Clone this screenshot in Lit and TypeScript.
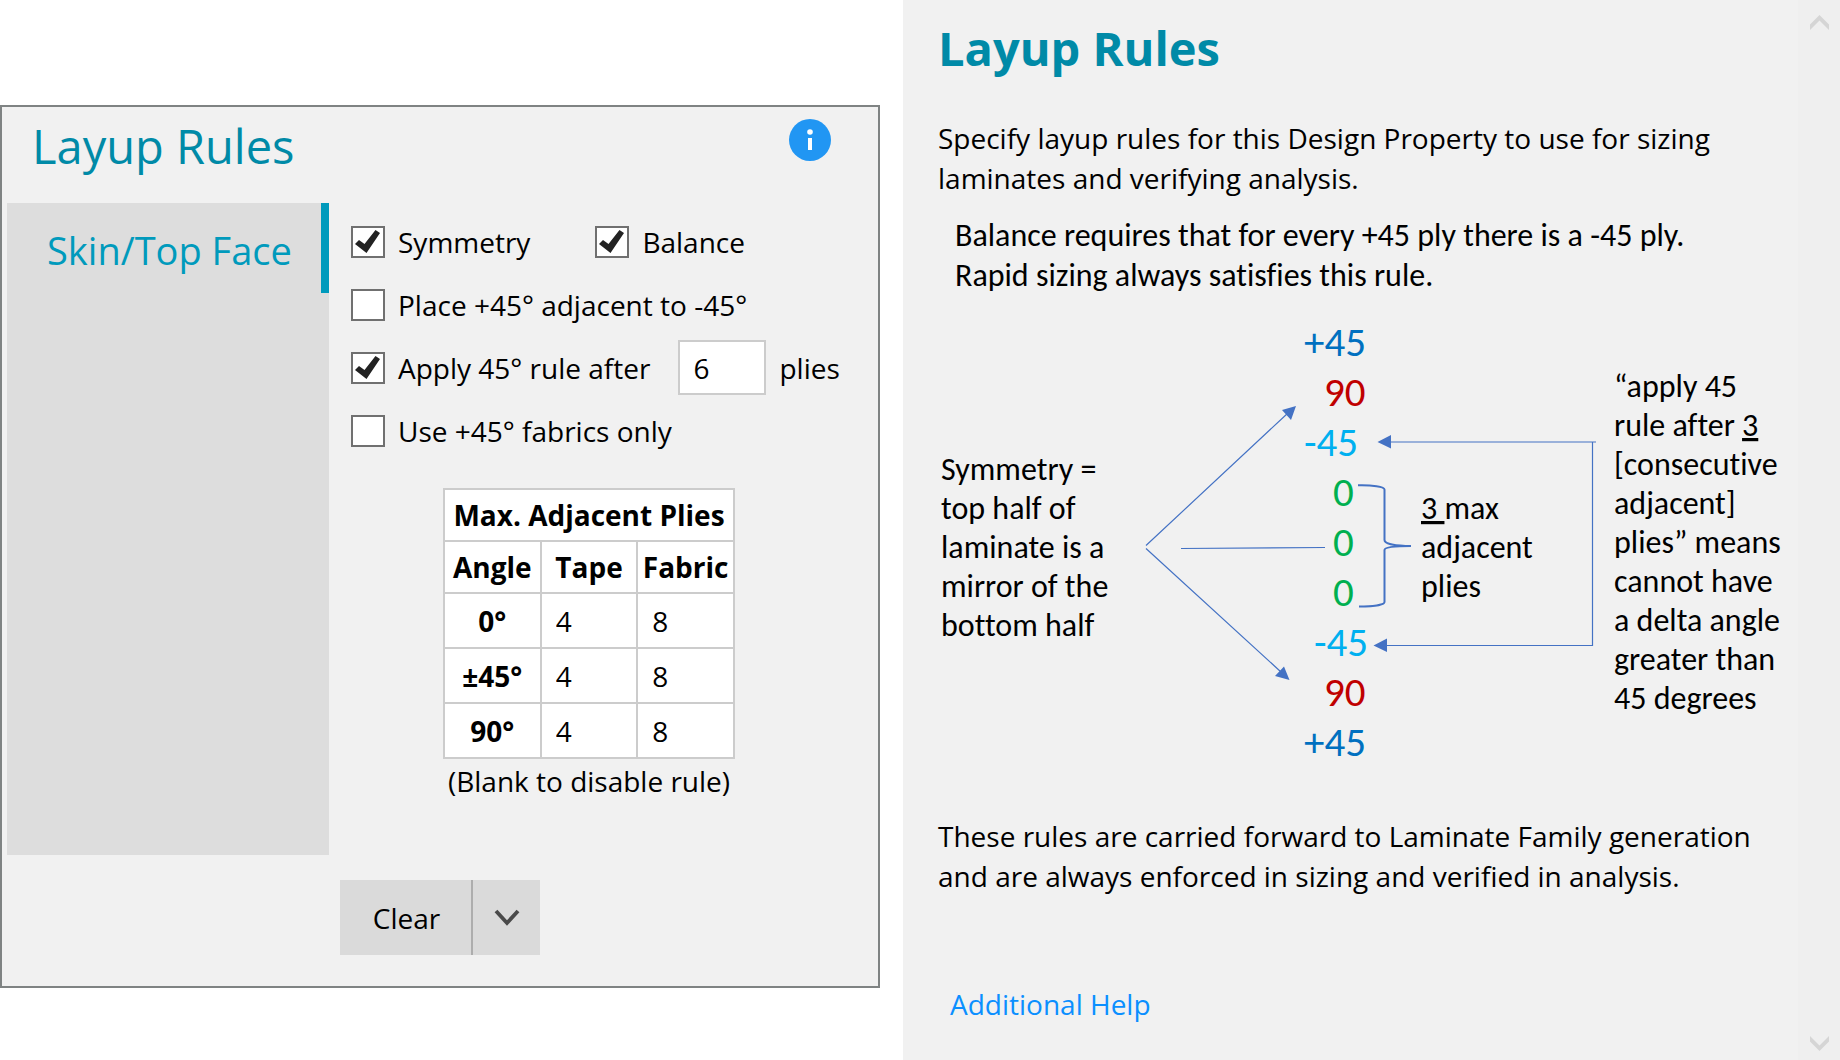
import { LitElement, html, svg, css } from "lit";
import { customElement, property } from "lit/decorators.js";

const UI_FONT = css`"Segoe UI", "Open Sans", "Noto Sans", sans-serif`;

@customElement("rule-check")
class RuleCheck extends LitElement {
  @property() label = "";
  @property({ type: Boolean }) checked = false;

  static styles = css`
    :host { display: block; }
    .rule { display: flex; align-items: center; gap: 13px; white-space: nowrap; }
    .box { display: grid; flex: none; width: 34px; height: 32px; }
    .box > * { grid-area: 1 / 1; }
    .tick {
      appearance: none; margin: 0; width: 34px; height: 32px;
      background: #fff; border: 2px solid #707070; border-radius: 0;
    }
    .mark { visibility: hidden; pointer-events: none; }
    .tick:checked + .mark { visibility: visible; }
  `;

  render() {
    return html`<label class="rule">
      <span class="box">
        <input class="tick" type="checkbox" .checked=${this.checked} />
        <svg class="mark" width="34" height="32" viewBox="0 0 34 32" aria-hidden="true">
          <path d="M4 18 L8 14 L13.500 18 L24.500 4 L29 7 L15.500 27 Z" fill="#222" />
        </svg>
      </span>
      ${this.label}
    </label>`;
  }
}

@customElement("layup-panel")
class LayupPanel extends LitElement {
  static styles = css`
    :host { display: block; }
    .panel { background: #f1f1f1; border: 2px solid #7f8383; padding-bottom: 31px; }
    .head { display: flex; align-items: center; justify-content: space-between; height: 96px; padding: 0 47px 0 30px; }
    .title { margin: 0; padding-bottom: 18px; font-size: 47px; line-height: 64px; font-weight: 400; color: #008aa7; }
    .info { display: block; padding: 0 0 30px; border: 0; background: none; }
    .info svg { display: block; }
    .body { display: grid; grid-template-columns: 322px minmax(0, 1fr); padding-left: 5px; }
    .side { background: #ddd; }
    .tab {
      display: block; width: 100%; height: 90px; padding: 4px 0 0 40px; border: 0;
      border-right: 8px solid #009abc; background: none; color: #009abc;
      font: inherit; font-size: 38px; line-height: 48px; text-align: left; white-space: nowrap;
    }
    .form { height: 652px; box-sizing: border-box; padding: 11px 0 0 22px; }
    .row { display: flex; align-items: center; height: 55px; margin-bottom: 8px; }
    .pair { gap: 65px; }
    .after { gap: 28px; }
    .count-wrap { display: flex; align-items: center; gap: 13px; }
    .count {
      box-sizing: border-box; width: 88px; height: 55px; padding: 0 0 0 13px;
      border: 2px solid #ccc; border-radius: 0; background: #fff; color: #000; font: inherit;
    }
    .limits { width: 292px; margin: 30px 0 0 92px; border-collapse: collapse; table-layout: fixed; background: #fff; }
    .limits caption { caption-side: bottom; padding-top: 2px; line-height: 40px; white-space: nowrap; color: #000; }
    .limits th, .limits td { height: 53px; padding: 0; border: 2px solid #ccc; box-sizing: border-box; }
    .limits thead th { height: 52px; }
    .limits th { font-weight: 700; text-align: center; white-space: nowrap; font-size: 28px; }
    .limits td { line-height: 0; }
    .limit {
      box-sizing: border-box; width: 100%; height: 53px; padding: 0 0 0 14px; border: 0;
      background: none; color: #000; font: inherit; line-height: 40px;
    }
    .foot { display: flex; padding: 25px 0 0 338px; }
    .clear, .more { height: 75px; border: 0; background: #dadada; color: #000; font: inherit; }
    .clear { width: 131px; padding: 0 0 0 2px; }
    .more { display: grid; place-items: center; width: 69px; padding: 0; border-left: 2px solid #adadad; }
  `;

  private rows = [
    { angle: "0°", tape: "4", fabric: "8" },
    { angle: "±45°", tape: "4", fabric: "8" },
    { angle: "90°", tape: "4", fabric: "8" },
  ];

  render() {
    return html`<section class="panel">
      <header class="head">
        <h1 class="title">Layup Rules</h1>
        <button class="info" aria-label="Information">
          <svg width="42" height="42" viewBox="0 0 42 42">
            <circle cx="21" cy="21" r="21" fill="#2196f3" />
            <circle cx="21" cy="13" r="2.8" fill="#fff" />
            <rect x="19" y="19" width="4" height="12" fill="#fff" />
          </svg>
        </button>
      </header>
      <div class="body">
        <nav class="side"><button class="tab">Skin/Top Face</button></nav>
        <div class="form">
          <div class="row pair">
            <rule-check label="Symmetry" checked></rule-check>
            <rule-check label="Balance" checked></rule-check>
          </div>
          <div class="row"><rule-check label="Place +45° adjacent to -45°"></rule-check></div>
          <div class="row after">
            <rule-check label="Apply 45° rule after" checked></rule-check>
            <label class="count-wrap"><input class="count" type="text" .value=${"6"} />plies</label>
          </div>
          <div class="row"><rule-check label="Use +45° fabrics only"></rule-check></div>
          <table class="limits">
            <caption>(Blank to disable rule)</caption>
            <thead>
              <tr><th colspan="3">Max. Adjacent Plies</th></tr>
              <tr><th>Angle</th><th>Tape</th><th>Fabric</th></tr>
            </thead>
            <tbody>
              ${this.rows.map((r) => html`<tr>
                <th scope="row">${r.angle}</th>
                <td><input class="limit" type="text" aria-label="${r.angle} tape" .value=${r.tape} /></td>
                <td><input class="limit" type="text" aria-label="${r.angle} fabric" .value=${r.fabric} /></td>
              </tr>`)}
            </tbody>
          </table>
        </div>
      </div>
      <footer class="foot">
        <button class="clear">Clear</button>
        <button class="more" aria-label="More clear options">
          <svg width="26" height="18" viewBox="0 0 26 18"><path d="M2 2 L13 14 L24 2" fill="none" stroke="#4a4a4a" stroke-width="3.8" /></svg>
        </button>
      </footer>
    </section>`;
  }
}

@customElement("ply-diagram")
class PlyDiagram extends LitElement {
  static styles = css`
    :host { display: block; padding-top: 12px; }
    .canvas { display: block; max-width: 100%; font-family: Calibri, Carlito, Lato, sans-serif; font-variant-ligatures: none; }
    .note { font-size: 32px; fill: #000; white-space: pre; }
    .under { text-decoration: underline; }
    .ply { font-size: 41px; }
    .p45 { fill: #0070c0; }
    .p90 { fill: #c00000; }
    .m45 { fill: #00b0f0; }
    .p0 { fill: #00b050; }
    .line { fill: none; stroke: #4472c4; stroke-width: 1.2; }
    .brace { fill: none; stroke: #4472c4; stroke-width: 2; }
    .tip { fill: #4472c4; }
  `;

  private plies = [
    { text: "+45", kind: "p45", x: 1304 },
    { text: "90", kind: "p90", x: 1324 },
    { text: "-45", kind: "m45", x: 1304 },
    { text: "0", kind: "p0", x: 1333 },
    { text: "0", kind: "p0", x: 1333 },
    { text: "0", kind: "p0", x: 1333 },
    { text: "-45", kind: "m45", x: 1314 },
    { text: "90", kind: "p90", x: 1324 },
    { text: "+45", kind: "p45", x: 1304 },
  ];

  private note(lines: unknown[], x: number, y: number, step: number) {
    return lines.map((line, i) => svg`<text class="note" x=${x} y=${y + i * step}>${line}</text>`);
  }

  render() {
    const three = svg`<tspan class="under">3</tspan>`;
    const threeGap = svg`<tspan class="under">3 </tspan>`;
    return html`<svg class="canvas" width="860" height="570" viewBox="938 210 860 570" role="img" aria-label="Ply stack">
      ${this.note(["Balance requires that for every +45 ply there is a -45 ply.", "Rapid sizing always satisfies this rule."], 955, 246, 40)}
      ${this.note(["Symmetry =", "top half of", "laminate is a", "mirror of the", "bottom half"], 941, 480, 39)}
      ${this.note([svg`${threeGap}max`, "adjacent", "plies"], 1421, 519, 39)}
      ${this.note(["“apply 45", svg`rule after ${three}`, "[consecutive", "adjacent]", "plies” means", "cannot have", "a delta angle", "greater than", "45 degrees"], 1614, 397, 39)}
      ${this.plies.map((p, i) => svg`<text class="ply ${p.kind}" x=${p.x} y=${356 + i * 50}>${p.text}</text>`)}
      <path class="line" d="M1146 545.5 L1288 413 M1146 548.5 L1281 672 M1181 548.5 L1325 547.5" />
      <path class="line" d="M1596 442 H1390 M1592.500 442 V645.500 H1386" />
      <path class="tip" d="M1296 406 L1282 410 L1291 420 Z M1289.500 680 L1284 666.500 L1275 676 Z M1377.500 442 L1391 435 V448.500 Z M1373.500 645.500 L1387 638.500 V652 Z" />
      <path class="brace" d="M1358 485.300 C1372 485 1384.500 486.500 1384.500 489.500 V540 C1384.500 544 1396 546 1411 546 C1396 546 1384.500 547 1384.500 550 V602 C1384.500 605 1372 606.500 1359 606.500" />
    </svg>`;
  }
}

@customElement("help-panel")
class HelpPanel extends LitElement {
  static styles = css`
    :host { display: block; }
    .panel { display: grid; grid-template-columns: minmax(0, 1fr) 42px; background: #f1f1f1; }
    .content { padding: 16px 0 16px 35px; }
    .title { margin: 0; font-size: 47px; line-height: 64px; font-weight: 700; color: #008aa7; }
    .text { margin: 0; line-height: 40px; max-width: 840px; }
    .intro { padding-top: 38px; }
    .closing { padding-top: 36px; }
    .link { display: inline-block; margin: 88px 0 0 12px; line-height: 40px; color: #0b8fff; text-decoration: none; }
    .rail { display: flex; flex-direction: column; justify-content: space-between; background: #efefef; padding: 14px 0 8px 12px; }
    .step { display: block; padding: 0; border: 0; background: none; }
    .step svg { display: block; }
  `;

  render() {
    return html`<aside class="panel">
      <div class="content">
        <h2 class="title">Layup Rules</h2>
        <p class="text intro">Specify layup rules for this Design Property to use for sizing laminates and verifying analysis.</p>
        <ply-diagram></ply-diagram>
        <p class="text closing">These rules are carried forward to Laminate Family generation and are always enforced in sizing and verified in analysis.</p>
        <a class="link" href="#help">Additional Help</a>
      </div>
      <div class="rail">
        <button class="step" aria-label="Scroll up"><svg width="19" height="16" viewBox="0 0 19 16"><path d="M0 10.500 L9.500 1 L19 10.500 V16 L9.500 6.500 L0 16 Z" fill="#d5d5d5" /></svg></button>
        <button class="step" aria-label="Scroll down"><svg width="19" height="16" viewBox="0 0 19 16"><path d="M0 0 L9.500 9.500 L19 0 V5.500 L9.500 15 L0 5.500 Z" fill="#d5d5d5" /></svg></button>
      </div>
    </aside>`;
  }
}

@customElement("app-root")
class AppRoot extends LitElement {
  static styles = css`
    :host { display: block; font: 28px / 40px ${UI_FONT}; color: #000; background: #fff; }
    .page { display: grid; grid-template-columns: minmax(0, 880fr) minmax(0, 937fr); gap: 23px; min-height: 100vh; }
    .left { padding-top: 105px; }
    .right { display: grid; }
  `;

  render() {
    return html`<main class="page">
      <layup-panel class="left"></layup-panel>
      <help-panel class="right"></help-panel>
    </main>`;
  }
}
